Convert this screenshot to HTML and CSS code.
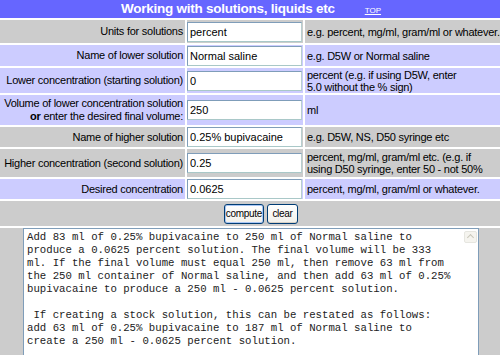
FILE: index.html
```html
<!DOCTYPE html>
<html lang="en">
<head>
    <meta charset="UTF-8">
    <title>Working with solutions, liquids etc</title>
    <link rel="stylesheet" href="styles.css">
</head>
<body>
    <div class="calc">
        <div class="title">Working with solutions, liquids etc<a href="#" class="top">TOP</a></div>

        <div class="cell label gray">Units for solutions</div>
        <div class="cell field gray"><input type="text" value="percent"></div>
        <div class="cell hint gray">e.g. percent, mg/ml, gram/ml or whatever.</div>

        <div class="cell label blue">Name of lower solution</div>
        <div class="cell field blue"><input type="text" value="Normal saline"></div>
        <div class="cell hint blue">e.g. D5W or Normal saline</div>

        <div class="cell label blue">Lower concentration (starting solution)</div>
        <div class="cell field blue"><input type="text" value="0"></div>
        <div class="cell hint blue"><span>percent (e.g. if using D5W, enter<br>5.0 without the % sign)</span></div>

        <div class="cell label blue"><span>Volume of lower concentration solution<br><b>or</b> enter the desired final volume:</span></div>
        <div class="cell field blue"><input type="text" value="250"></div>
        <div class="cell hint blue">ml</div>

        <div class="cell label gray">Name of higher solution</div>
        <div class="cell field gray"><input type="text" value="0.25% bupivacaine"></div>
        <div class="cell hint gray">e.g. D5W, NS, D50 syringe etc</div>

        <div class="cell label gray">Higher concentration (second solution)</div>
        <div class="cell field gray"><input type="text" value="0.25"></div>
        <div class="cell hint gray"><span>percent, mg/ml, gram/ml etc. (e.g. if<br>using D50 syringe, enter 50 - not 50%</span></div>

        <div class="cell label blue">Desired concentration</div>
        <div class="cell field blue"><input type="text" value="0.0625"></div>
        <div class="cell hint blue">percent, mg/ml, gram/ml or whatever.</div>

        <div class="actions gray">
            <button class="btn btn-default btn-compute">compute</button>
            <button class="btn btn-clear">clear</button>
        </div>

        <div class="output gray">
            <div class="output-box">
                <textarea class="result" readonly>Add 83 ml of 0.25% bupivacaine to 250 ml of Normal saline to
produce a 0.0625 percent solution. The final volume will be 333
ml. If the final volume must equal 250 ml, then remove 63 ml from
the 250 ml container of Normal saline, and then add 63 ml of 0.25%
bupivacaine to produce a 250 ml - 0.0625 percent solution.

 If creating a stock solution, this can be restated as follows:
add 63 ml of 0.25% bupivacaine to 187 ml of Normal saline to
create a 250 ml - 0.0625 percent solution.</textarea>
                <span class="scroll-up"></span>
            </div>
        </div>
    </div>
</body>
</html>
```

FILE: styles.css
```css
body {
    margin: 0;
    background-color: white;
    font-family: "Liberation Sans", Arial, sans-serif;
    font-size: 11px;
    color: #000;
    overflow: hidden;
}
.calc {
    display: grid;
    grid-template-columns: 185px 116px 197px;
    grid-template-rows: 18px 23px 21px 25px 30px 20px 28px 20px 25px 140px;
    gap: 2px;
    width: 500px;
}
.gray {
    background-color: #cccccc;
}
.blue {
    background-color: #ccccff;
}
.cell {
    display: flex;
    align-items: center;
    white-space: nowrap;
    overflow: hidden;
}
.title {
    grid-column: 1 / 4;
    display: flex;
    justify-content: center;
    align-items: baseline;
    padding-top: 1px;
    background-color: #6666ff;
    color: white;
    font-size: 13.5px;
    font-weight: bold;
    letter-spacing: -0.25px;
    line-height: 16px;
}
.top {
    color: white;
    font-size: 8px;
    font-weight: normal;
    letter-spacing: 0;
    margin-left: 30px;
}
.label {
    justify-content: flex-end;
    text-align: right;
    padding-right: 2px;
    letter-spacing: -0.25px;
    line-height: 13px;
}
.hint {
    padding-left: 2px;
    letter-spacing: -0.25px;
    line-height: 12px;
}
.field input {
    display: block;
    width: 115px;
    height: 20px;
    box-sizing: border-box;
    margin: 0;
    padding: 0 2px;
    border: 1px solid #7f9db9;
    border-right-color: #b7cfd0;
    border-bottom-color: #a9c8c8;
    font-family: "Liberation Sans", Arial, sans-serif;
    font-size: 11px;
    color: #000;
    background-color: white;
}
.actions {
    grid-column: 1 / 4;
    display: flex;
    justify-content: center;
    align-items: center;
    gap: 3px;
    padding-left: 20px;
}
.btn {
    font-family: "Liberation Sans", Arial, sans-serif;
    font-size: 10px;
    letter-spacing: -0.3px;
    height: 20px;
    padding: 0;
    margin: 0;
    border: 1px solid #003c74;
    border-radius: 3px;
    background: linear-gradient(#ffffff, #f1f0ea);
    color: #000;
    box-shadow: inset 0 -1px 0 #d6d0c5;
}
.btn-compute {
    width: 40px;
}
.btn-clear {
    width: 31px;
}
.btn-default {
    box-shadow: inset 0 0 0 1px #a8c6f4;
}
.output {
    grid-column: 1 / 4;
}
.output-box {
    position: relative;
    width: 456px;
    margin: 0 auto;
}
.result {
    display: block;
    width: 456px;
    height: 140px;
    box-sizing: border-box;
    margin: 0;
    padding: 2px 3px;
    border: 1px solid #7f9db9;
    font-family: "Liberation Mono", "Courier New", monospace;
    font-size: 10.7px;
    line-height: 13px;
    color: #222;
    background-color: white;
    resize: none;
    overflow: hidden;
    white-space: pre;
}
.scroll-up {
    position: absolute;
    top: 3px;
    right: 2px;
    width: 11px;
    height: 10px;
    border: 1px solid #e6e6e0;
    border-radius: 2px;
    background-color: #f5f4ef;
}
.scroll-up::after {
    content: "";
    position: absolute;
    left: 3px;
    top: 3px;
    width: 4px;
    height: 4px;
    border-left: 1px solid #c9c7ba;
    border-top: 1px solid #c9c7ba;
    transform: rotate(45deg);
}
```
